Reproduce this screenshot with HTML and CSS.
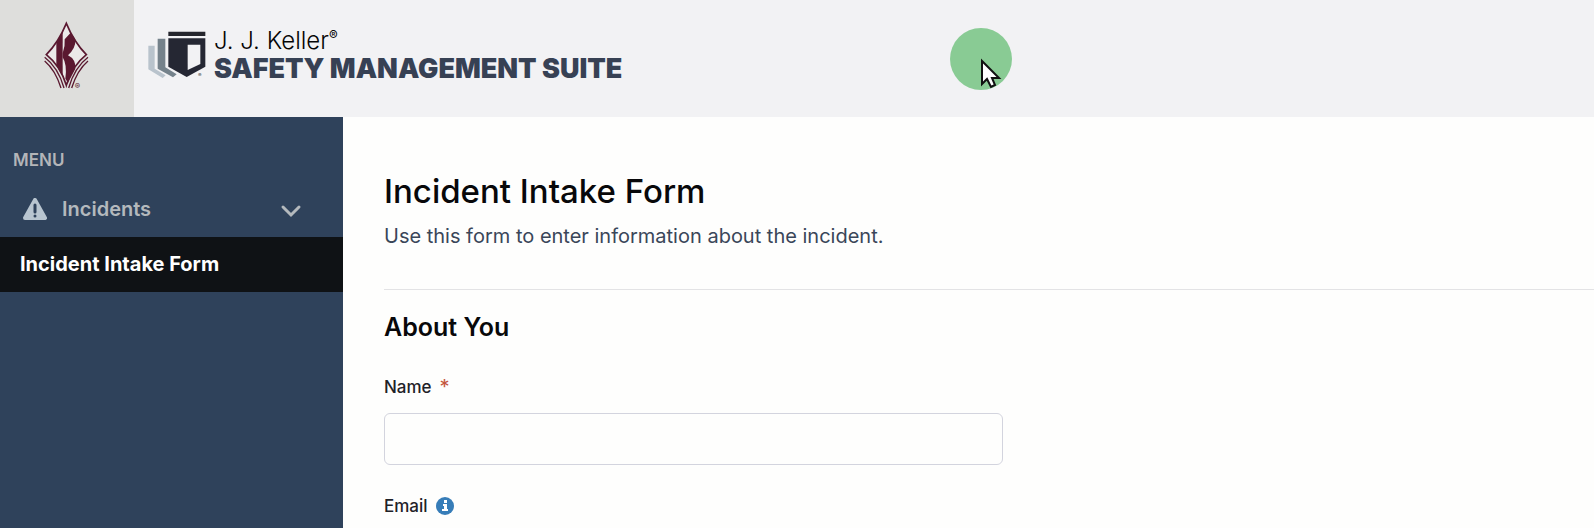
FILE: index.html
```html
<!DOCTYPE html>
<html lang="en">

<head>
    <meta charset="UTF-8">
    <meta name="viewport" content="width=device-width, initial-scale=1.0">
    <title>Incident Intake Form</title>
    <link rel="stylesheet" href="styles.css">
</head>

<body>
    <header class="header">
        <div class="company-logo">
            <svg width="80" height="90" viewBox="0 0 240 270" aria-hidden="true">
                <path d="M109 40 Q86 96 49 134 Q92 168 109 226 Q126 168 169 134 Q132 96 109 40Z" fill="#ebe9e9" stroke="#5a1830" stroke-width="5" />
                <path d="M79 98 L98 66 V200 L79 166Z" fill="#5a1830" />
                <path d="M98 130 Q106 108 104 88 L122 68 L136 88 Q138 114 114 136 Q138 148 136 176 L114 218 L106 206 Q112 164 98 142Z" fill="#5a1830" />
                <path d="M44 142 Q84 172 102 234 M44 153 Q76 180 93 234 M174 142 Q134 172 116 234 M174 153 Q142 180 125 234" fill="none" stroke="#5a1830" stroke-width="4" />
                <text x="134" y="236" class="mark-large">®</text>
            </svg>
        </div>
        <a class="brand" href="#">
            <svg width="60" height="50" viewBox="20 28 180 150" aria-hidden="true">
                <path d="M24 78 H43 V147 L76 167 L67 175 L24 149Z" fill="#b9c3cc" />
                <path d="M52 57 H75 V143 L109 164 L98 173 L52 147Z" fill="#75828b" />
                <path d="M84 36 H195 V49 H84Z" fill="#25262d" />
                <path d="M84 56 H195 V141 L139 172 L84 141Z" fill="#252733" />
                <path d="M142 75 H180 V133 L142 151Z" fill="#f2f2f4" />
                <text x="173" y="171" class="mark">®</text>
            </svg>
            <span class="brand-text">
                <span class="brand-name">J. J. Keller<sup>®</sup></span>
                <span class="brand-product">SAFETY MANAGEMENT SUITE</span>
            </span>
        </a>
        <svg class="pointer" width="62" height="62" viewBox="0 0 62 62" aria-hidden="true">
            <circle cx="31" cy="31" r="31" fill="#89cb94" />
            <path d="M32 33 V56 L37 51 L41 59 L45 57 L42 50 H49Z" fill="#fff" stroke="#111" stroke-width="2" />
        </svg>
    </header>

    <div class="layout">
        <nav class="sidebar">
            <div class="menu-title">MENU</div>
            <button class="menu-group" type="button">
                <svg width="24" height="22" viewBox="0 0 24 22" aria-hidden="true">
                    <path d="M12 2 L22 20 H2Z" fill="#b8c5d0" stroke="#b8c5d0" stroke-width="4" stroke-linejoin="round" />
                    <path d="M12 7 V14" stroke="#2f425b" stroke-width="3" stroke-linecap="round" />
                    <circle cx="12" cy="18" r="1.5" fill="#2f425b" />
                </svg>
                <span>Incidents</span>
                <svg class="chevron" width="22" height="20" viewBox="0 0 22 20" aria-hidden="true">
                    <path d="M3 8 L11 16 L19 8" fill="none" stroke="#b4b9bd" stroke-width="3" stroke-linecap="round" />
                </svg>
            </button>
            <a class="menu-item" href="#">Incident Intake Form</a>
        </nav>

        <main class="content">
            <h1>Incident Intake Form</h1>
            <p class="intro">Use this form to enter information about the incident.</p>
            <form>
                <h2>About You</h2>
                <div class="field">
                    <label for="name">Name <span class="required">*</span></label>
                    <input type="text" id="name" required>
                </div>
                <div class="field">
                    <label for="email">Email
                        <svg width="18" height="18" viewBox="0 0 18 18" aria-hidden="true">
                            <circle cx="9" cy="9" r="9" fill="#377db8" />
                            <path d="M8 3 H11 V6 H8Z M7 7 H11 V12 H12 V14 H6 V12 H8 V9 H7Z" fill="#fff" />
                        </svg>
                    </label>
                    <input type="email" id="email">
                </div>
            </form>
        </main>
    </div>
</body>

</html>
```
FILE: styles.css
```css
* {
    box-sizing: border-box;
}

body {
    margin: 0;
    height: 100vh;
    display: flex;
    flex-direction: column;
    overflow: hidden;
    font-family: Inter, "Liberation Sans", sans-serif;
    color: #1f2228;
    background-color: #fefefd;
}

.header {
    position: relative;
    display: flex;
    flex-shrink: 0;
    background-color: #f2f2f4;
}

.company-logo {
    padding: 10px 24px 17px 30px;
    line-height: 0;
    background-color: #dededc;
}

.brand {
    display: flex;
    align-items: flex-start;
    gap: 7px;
    padding: 29px 0 0 13px;
    text-decoration: none;
}

.brand-text {
    display: flex;
    flex-direction: column;
}

.brand-name {
    font-size: 24px;
    line-height: 24px;
    font-weight: 300;
    color: #050505;
}

.brand-name sup {
    font-size: 13px;
    line-height: 0;
    font-weight: 400;
}

.brand-product {
    font-size: 27px;
    line-height: 32px;
    font-weight: 900;
    color: #374154;
}

.mark {
    font-size: 16px;
    fill: #555;
}

.mark-large {
    font-size: 24px;
    fill: #5a1830;
}

.pointer {
    position: absolute;
    top: 28px;
    left: 950px;
}

.layout {
    display: flex;
    flex: 1;
    min-height: 0;
}

.sidebar {
    flex: 0 0 343px;
    padding-top: 32px;
    background-color: #2f425b;
}

.menu-title {
    padding: 0 13px;
    font-size: 17px;
    line-height: 22px;
    font-weight: 600;
    color: #b4b5b8;
}

.menu-group {
    display: flex;
    align-items: center;
    gap: 15px;
    width: 100%;
    height: 56px;
    margin-top: 10px;
    padding: 0 41px 0 23px;
    border: 0;
    font: inherit;
    font-size: 20px;
    font-weight: 600;
    color: #b4b9bd;
    background: none;
}

.chevron {
    margin-left: auto;
}

.menu-item {
    display: block;
    padding: 0 20px;
    font-size: 20px;
    line-height: 55px;
    font-weight: 700;
    color: #fff;
    text-decoration: none;
    background-color: #0f1215;
}

.content {
    flex: 1;
    padding: 54px 0 0 41px;
}

h1 {
    margin: 0;
    font-size: 33px;
    line-height: 40px;
    font-weight: 500;
    color: #08080a;
}

.intro {
    margin: 0;
    padding: 11px 0 39px;
    font-size: 20px;
    line-height: 28px;
    color: #3a4659;
    border-bottom: 1px solid #e3e3e5;
}

h2 {
    margin: 21px 0 32px;
    font-size: 25px;
    line-height: 32px;
    font-weight: 600;
    color: #08080a;
}

.field {
    max-width: 619px;
    margin-bottom: 29px;
}

.field label {
    display: flex;
    align-items: center;
    gap: 8px;
    margin-bottom: 14px;
    font-size: 17px;
    line-height: 24px;
    font-weight: 500;
}

.required {
    font-size: 20px;
    font-weight: 400;
    color: #c4563c;
}

.field input {
    display: block;
    width: 100%;
    height: 52px;
    padding: 0 12px;
    border: 1px solid #d3d4de;
    border-radius: 6px;
    font: inherit;
    background-color: #fefefd;
}
```
